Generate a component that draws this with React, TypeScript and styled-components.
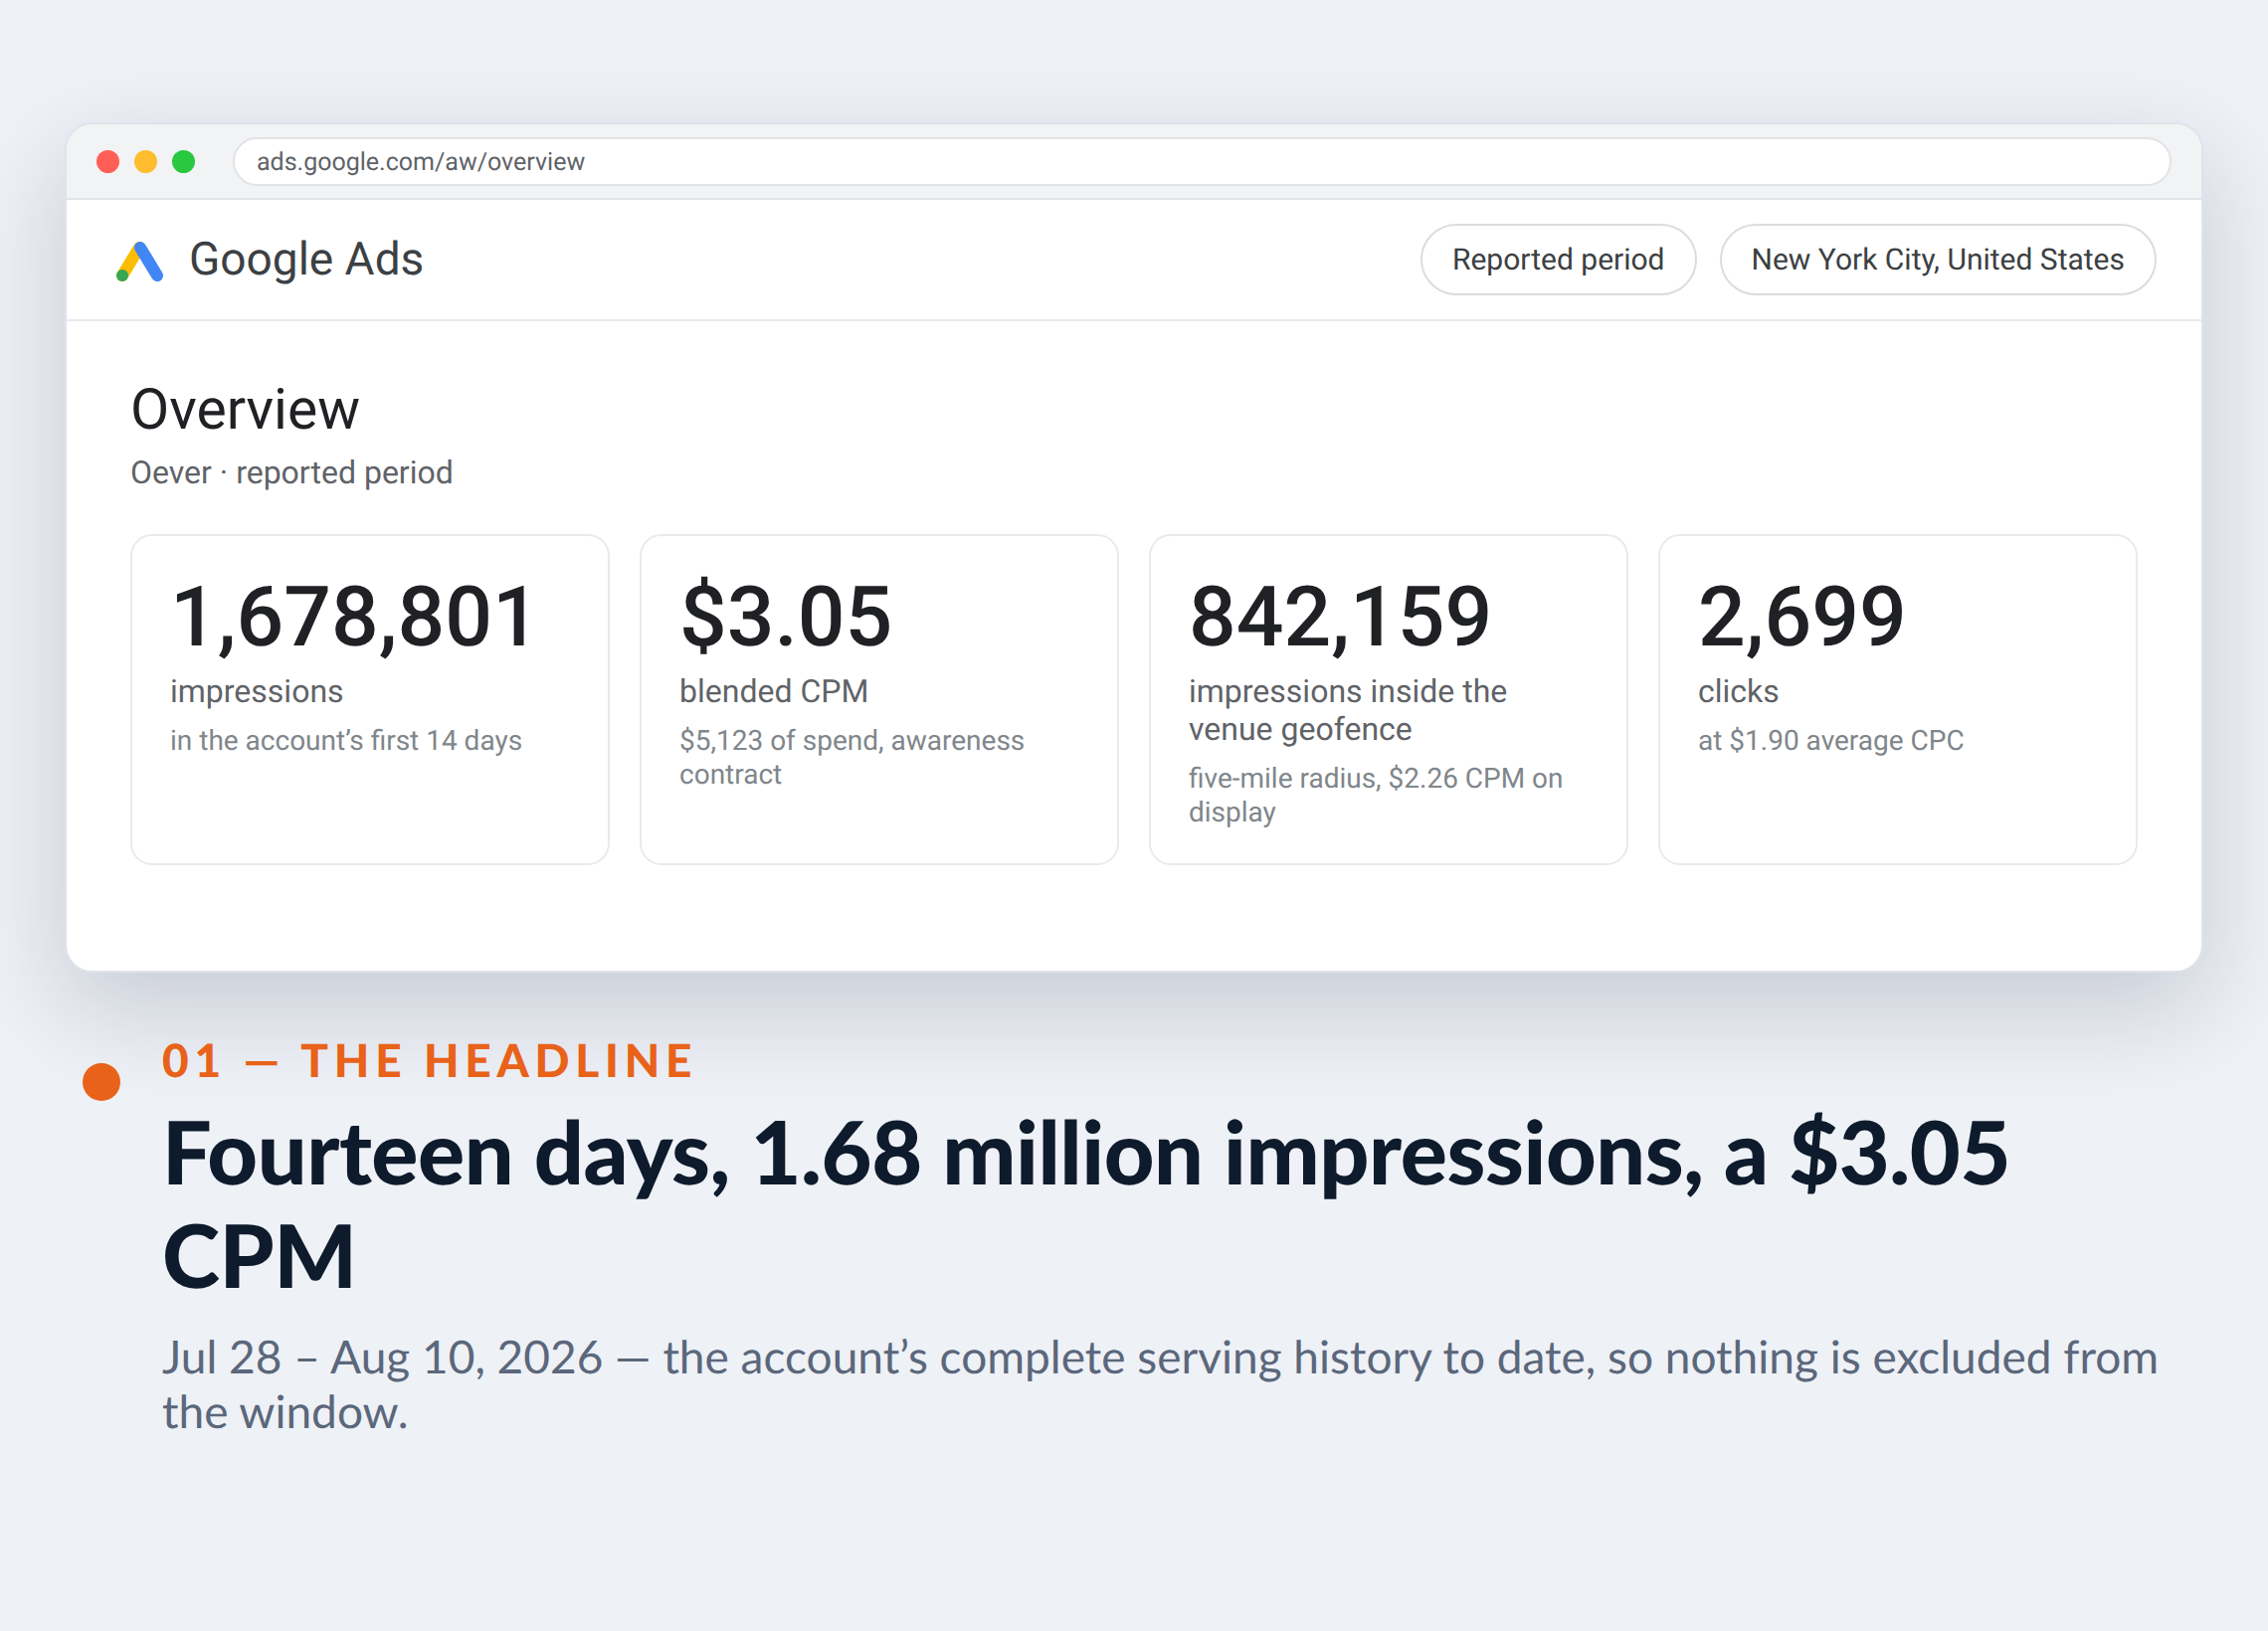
import React from "react";
import styled, { createGlobalStyle } from "styled-components";

const Global = createGlobalStyle`
  *, *::before, *::after { box-sizing: border-box; }
  body {
    margin: 0;
    background: #eef1f6;
    font-family: Roboto, "Liberation Sans", sans-serif;
    text-rendering: geometricPrecision;
  }
  h1, h2, p { margin: 0; font-weight: 400; }
  input, button { text-rendering: inherit; }
`;

const Page = styled.div`
  display: flex;
  flex-direction: column;
  gap: 60px;
  padding: 123px 65px 120px;
`;

const Browser = styled.section`
  background: #fff;
  border: 2px solid #dfe3ea;
  border-radius: 28px;
  overflow: hidden;
  box-shadow: 0 36px 100px rgba(20, 32, 60, 0.18);
`;

const TitleBar = styled.div`
  display: flex;
  align-items: center;
  gap: 38px;
  padding: 13px 30px 12px;
  background: #f1f3f4;
  border-bottom: 2px solid #e1e3e6;
`;

const Lights = styled.div`
  display: flex;
  gap: 15px;
`;

const Light = styled.span<{ $color: string }>`
  width: 23px;
  height: 23px;
  border-radius: 50%;
  background: ${(p) => p.$color};
`;

const Address = styled.input`
  flex: 1;
  min-width: 0;
  height: 49px;
  padding: 1px 22px 0;
  border: 2px solid #e1e3e6;
  border-radius: 25px;
  background: #fff;
  color: #5f6368;
  font: 400 25px Roboto, sans-serif;
`;

const AppBar = styled.header`
  display: flex;
  align-items: center;
  justify-content: space-between;
  padding: 24px 45px 24px 48px;
  border-bottom: 2px solid #e8eaed;
`;

const Brand = styled.div`
  display: flex;
  align-items: center;
  gap: 23px;
  color: #3c4043;
  font-size: 46px;
  line-height: 58px;
`;

const Filters = styled.div`
  display: flex;
  gap: 23px;
`;

const Filter = styled.button`
  height: 72px;
  padding: 0 30px;
  border: 2px solid #dadce0;
  border-radius: 36px;
  background: #fff;
  color: #3c4043;
  font: 400 30px Roboto, sans-serif;
`;

const Overview = styled.main`
  padding: 59px 64px 106px;
`;

const OverviewTitle = styled.h1`
  color: #202124;
  font-size: 57px;
  line-height: 60px;
`;

const Account = styled.p`
  margin-top: 13px;
  color: #5f6368;
  font-size: 32px;
  line-height: 40px;
`;

const Cards = styled.div`
  display: grid;
  grid-template-columns: repeat(4, 1fr);
  gap: 30px;
  margin-top: 42px;
`;

const Card = styled.article`
  padding: 40px 38px 34px;
  border: 2px solid #e8eaed;
  border-radius: 22px;
`;

const Value = styled.p`
  color: #202124;
  font-size: 84px;
  font-weight: 500;
  line-height: 84px;
`;

const Label = styled.p`
  margin-top: 13px;
  color: #5f6368;
  font-size: 32px;
  line-height: 38px;
`;

const Note = styled.p`
  margin-top: 14px;
  color: #80868b;
  font-size: 28px;
  line-height: 34px;
`;

const Caption = styled.section`
  display: flex;
  align-items: flex-start;
  gap: 42px;
  padding-left: 18px;
  font-family: Lato, sans-serif;
`;

const Dot = styled.span`
  flex: none;
  width: 38px;
  height: 38px;
  margin-top: 31px;
  border-radius: 50%;
  background: #e8621a;
`;

const Eyebrow = styled.p`
  color: #e8621a;
  font-size: 46px;
  font-weight: 900;
  line-height: 55px;
  letter-spacing: 0.125em;
`;

const Headline = styled.h2`
  margin-top: 12px;
  color: #0e1b2c;
  font-size: 88px;
  font-weight: 900;
  line-height: 104px;
  letter-spacing: -0.005em;
`;

const Detail = styled.p`
  margin-top: 23px;
  color: #5b677b;
  font-size: 46px;
  line-height: 55px;
`;

const cards = [
  { value: "1,678,801", label: "impressions", note: "in the account’s first 14 days" },
  { value: "$3.05", label: "blended CPM", note: "$5,123 of spend, awareness contract" },
  { value: "842,159", label: "impressions inside the venue geofence", note: "five-mile radius, $2.26 CPM on display" },
  { value: "2,699", label: "clicks", note: "at $1.90 average CPC" },
];

const AdsLogo = () => (
  <svg width="52" height="52" viewBox="0 0 52 52" aria-hidden="true">
    <path d="M25 14 8 42" stroke="#fbbc04" strokeWidth="12" strokeLinecap="round" />
    <path d="M26 14 43 42" stroke="#4285f4" strokeWidth="12" strokeLinecap="round" />
    <circle cx="8" cy="42" r="6" fill="#34a853" />
  </svg>
);

export default function App() {
  return (
    <>
      <Global />
      <Page>
        <Browser>
          <TitleBar>
            <Lights>
              <Light $color="#ff5f57" />
              <Light $color="#febc2e" />
              <Light $color="#28c840" />
            </Lights>
            <Address aria-label="Address" defaultValue="ads.google.com/aw/overview" />
          </TitleBar>
          <AppBar>
            <Brand>
              <AdsLogo />
              <span>Google Ads</span>
            </Brand>
            <Filters>
              <Filter type="button">Reported period</Filter>
              <Filter type="button">New York City, United States</Filter>
            </Filters>
          </AppBar>
          <Overview>
            <OverviewTitle>Overview</OverviewTitle>
            <Account>Oever · reported period</Account>
            <Cards>
              {cards.map((c) => (
                <Card key={c.value}>
                  <Value>{c.value}</Value>
                  <Label>{c.label}</Label>
                  <Note>{c.note}</Note>
                </Card>
              ))}
            </Cards>
          </Overview>
        </Browser>
        <Caption>
          <Dot />
          <div>
            <Eyebrow>01 — THE HEADLINE</Eyebrow>
            <Headline>Fourteen days, 1.68 million impressions, a $3.05 CPM</Headline>
            <Detail>
              Jul 28 – Aug 10, 2026 — the account’s complete serving history to date, so nothing is
              excluded from the window.
            </Detail>
          </div>
        </Caption>
      </Page>
    </>
  );
}
